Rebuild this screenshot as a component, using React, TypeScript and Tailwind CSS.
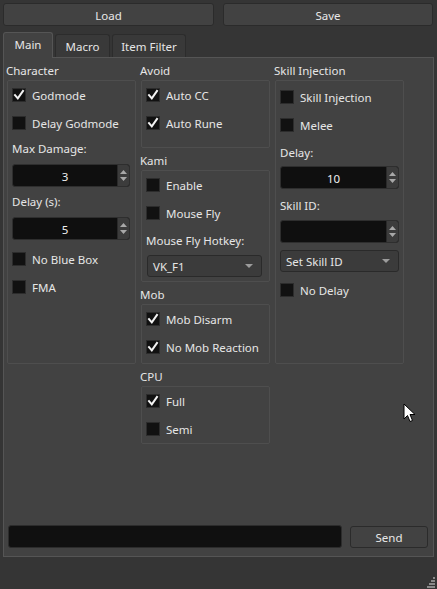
import React from "react";

const Tick = () => (
  <svg width="12" height="12" viewBox="0 0 12 12" className="block">
    <polyline points="2,6.2 4.8,9.4 10,2" fill="none" stroke="#f2f2f2" strokeWidth="2" strokeLinecap="square" strokeLinejoin="miter" />
  </svg>
);

function Check({ label, checked = false }: { label: string; checked?: boolean }) {
  return (
    <div className="h-[28px] flex items-center gap-[6px]">
      <div className="w-[14px] h-[14px] bg-[#111111] border border-[#2c2c2c] flex items-center justify-center">
        {checked && <Tick />}
      </div>
      <span className="pt-[2px]">{label}</span>
    </div>
  );
}

function Spin({ value, w }: { value?: string; w: number }) {
  return (
    <div
      className="h-[23px] bg-[#0f0f0f] border border-[#2e2e2e] rounded-[3px] flex overflow-hidden"
      style={{ width: w }}
    >
      <div className="flex-1 flex items-center justify-center pt-[2px] text-[#f0f0f0]">{value}</div>
      <div className="w-[12px] bg-[#3c3c3c] border-l border-[#2a2a2a] flex flex-col items-center justify-center gap-[3px]">
        <svg width="7" height="4" viewBox="0 0 7 4" className="block">
          <polygon points="0,4 3.5,0 7,4" fill="#a8a8a8" />
        </svg>
        <svg width="7" height="4" viewBox="0 0 7 4" className="block">
          <polygon points="0,0 7,0 3.5,4" fill="#a8a8a8" />
        </svg>
      </div>
    </div>
  );
}

function Combo({ value, w }: { value: string; w: number }) {
  return (
    <div
      className="h-[22px] bg-[#3b3b3b] border border-[#2a2a2a] rounded-[3px] flex items-center justify-between pl-[5px] pr-[8px]"
      style={{ width: w }}
    >
      <span className="pt-[2px]">{value}</span>
      <svg width="8" height="4" viewBox="0 0 8 4" className="block">
        <polygon points="0,0 8,0 4,4" fill="#9c9c9c" />
      </svg>
    </div>
  );
}

function Label({ children }: { children: React.ReactNode }) {
  return <div className="h-[22px] flex items-center pt-[2px]">{children}</div>;
}

function Section({
  title,
  children,
  className = "",
  first = false,
}: {
  title: string;
  children: React.ReactNode;
  className?: string;
  first?: boolean;
}) {
  return (
    <div className={first ? "flex flex-col" : "flex flex-col mt-[4px]"}>
      <div className="h-[16px] leading-[16px] ml-[-1px] pt-[1px]">{title}</div>
      <div className={`mt-[2px] w-[129px] border border-[#4e4e4e] rounded-[2px] pl-[4px] ${className}`}>
        {children}
      </div>
    </div>
  );
}

export default function App() {
  return (
    <div className="relative w-[437px] h-[589px] bg-[#353535] text-[#e6e6e6] text-[11.5px] font-['Noto_Sans',sans-serif] flex flex-col overflow-hidden">
      {/* Load / Save */}
      <div className="flex gap-[9px] pt-[3px] pl-[3px] pr-[4px]">
        <button className="w-[211px] h-[23px] bg-[#424242] border border-[#2b2b2b] rounded-[3px] text-[#e8e8e8] pt-[2px]">
          Load
        </button>
        <button className="flex-1 h-[23px] bg-[#424242] border border-[#2b2b2b] rounded-[3px] text-[#e8e8e8] pt-[2px]">
          Save
        </button>
      </div>

      {/* Tabs */}
      <div className="flex items-end gap-[2px] mt-[6px] pl-[3px] h-[25px] relative z-10">
        <div className="w-[50px] h-[26px] mb-[-1px] bg-[#424242] border border-b-0 border-[#555555] rounded-t-[3px] flex items-center justify-center pb-[1px]">
          Main
        </div>
        <div className="w-[55px] h-[23px] bg-[#393939] border border-b-0 border-[#2c2c2c] rounded-t-[3px] flex items-center justify-center pt-[2px]">
          Macro
        </div>
        <div className="w-[74px] h-[23px] bg-[#393939] border border-b-0 border-[#2c2c2c] rounded-t-[3px] flex items-center justify-center pt-[2px]">
          Item Filter
        </div>
      </div>

      {/* Tab pane */}
      <div className="ml-[3px] w-[431px] h-[500px] bg-[#424242] border border-[#555555] flex flex-col">
        <div className="flex gap-[5px] pl-[3px] pt-[4px]">
          {/* Character */}
          <div className="flex flex-col">
            <Section title="Character" first className="h-[284px]">
              <Check label="Godmode" checked />
              <Check label="Delay Godmode" />
              <Label>Max Damage:</Label>
              <div className="mt-[5px]">
                <Spin value="3" w={118} />
              </div>
              <div className="mt-[3px]">
                <Label>Delay (s):</Label>
              </div>
              <div className="mt-[5px]">
                <Spin value="5" w={118} />
              </div>
              <div className="mt-[5px]">
                <Check label="No Blue Box" />
                <Check label="FMA" />
              </div>
            </Section>
          </div>

          {/* Avoid / Kami / Mob / CPU */}
          <div className="flex flex-col">
            <Section title="Avoid" first className="h-[68px]">
              <Check label="Auto CC" checked />
              <Check label="Auto Rune" checked />
            </Section>
            <Section title="Kami" className="h-[112px]">
              <Check label="Enable" />
              <Check label="Mouse Fly" />
              <div className="mt-[2px]">
                <Label>Mouse Fly Hotkey:</Label>
              </div>
              <div className="mt-[4px] ml-[1px]">
                <Combo value="VK_F1" w={115} />
              </div>
            </Section>
            <Section title="Mob" className="h-[60px]">
              <Check label="Mob Disarm" checked />
              <Check label="No Mob Reaction" checked />
            </Section>
            <Section title="CPU" className="h-[58px]">
              <Check label="Full" checked />
              <Check label="Semi" />
            </Section>
          </div>

          {/* Skill Injection */}
          <div className="flex flex-col">
            <Section title="Skill Injection" first className="h-[284px] pt-[2px]">
              <Check label="Skill Injection" />
              <Check label="Melee" />
              <div className="mt-[2px]">
                <Label>Delay:</Label>
              </div>
              <div className="mt-[3px]">
                <Spin value="10" w={119} />
              </div>
              <div className="mt-[5px]">
                <Label>Skill ID:</Label>
              </div>
              <div className="mt-[4px]">
                <Spin w={119} />
              </div>
              <div className="mt-[7px]">
                <Combo value="Set Skill ID" w={119} />
              </div>
              <div className="mt-[4px]">
                <Check label="No Delay" />
              </div>
            </Section>
          </div>
        </div>

        <div className="flex-1" />

        {/* Command line */}
        <div className="flex items-center gap-[8px] pl-[4px] pr-[5px] pb-[8px]">
          <div className="w-[334px] h-[23px] bg-[#101010] border border-[#2c2c2c] rounded-[3px]" />
          <button className="flex-1 h-[22px] bg-[#424242] border border-[#2b2b2b] rounded-[3px] text-[#e8e8e8] pt-[2px]">
            Send
          </button>
        </div>
      </div>

      {/* Size grip */}
      <svg className="absolute right-[1px] bottom-[1px]" width="11" height="11" viewBox="0 0 11 11">
        {[
          [8, 0],
          [6, 3],
          [8, 3],
          [4, 6],
          [6, 6],
          [8, 6],
          [2, 9],
          [4, 9],
          [6, 9],
          [8, 9],
        ].map(([x, y], i) => (
          <rect key={i} x={x} y={y} width="2" height="2" fill="#8a8a8a" />
        ))}
      </svg>

      {/* Mouse pointer */}
      <svg className="absolute left-[403px] top-[403px]" width="13" height="20" viewBox="0 0 13 20">
        <path
          d="M1 1 L1 16 L4.5 12.5 L7 18.5 L9.5 17.5 L7 11.5 L12 11.5 Z"
          fill="#ffffff"
          stroke="#000000"
          strokeWidth="1"
          strokeLinejoin="miter"
        />
      </svg>
    </div>
  );
}
